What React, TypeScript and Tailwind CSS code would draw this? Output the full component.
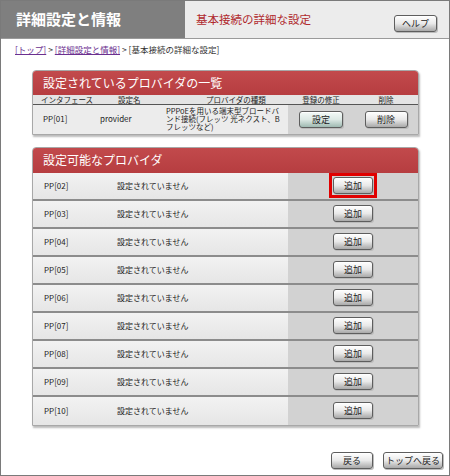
import React from 'react';

const jp = { fontFamily: '"Noto Sans CJK JP", "Liberation Sans", sans-serif' };

const Btn: React.FC<{ label: string; w?: string; teal?: boolean }> = ({ label, w = 'w-[42px]', teal }) => (
    <button
        className={`${w} h-[17px] rounded-[3px] border border-[#5e5e5e] text-[9px] leading-none text-[#222] shadow-[inset_0_1px_0_#fff,1px_1px_0_#bbb] ${
            teal
                ? 'bg-gradient-to-b from-[#f4faf8] via-[#dde9e5] to-[#9fbab2]'
                : 'bg-gradient-to-b from-[#ffffff] via-[#e9e9e9] to-[#a9a9a9]'
        }`}
    >
        {label}
    </button>
);

const slots = ['02', '03', '04', '05', '06', '07', '08', '09', '10'];

export default function App() {
    return (
        <div style={jp} className="w-[450px] h-[476px] border border-[#7a7a7a] bg-white flex flex-col">
            {/* ヘッダー */}
            <div className="flex h-[38px] border-b border-[#9a9a9a]">
                <div className="w-[184px] bg-[#7f7f7f] text-white font-bold text-[15px] flex items-center pl-[15px]">
                    詳細設定と情報
                </div>
                <div className="flex-1 bg-[#ececec] flex items-center pl-[11px] pr-[12px]">
                    <span className="text-[11.5px] text-[#b02a2e]">基本接続の詳細な設定</span>
                    <div className="ml-auto">
                        <Btn label="ヘルプ" w="w-[43px]" />
                    </div>
                </div>
            </div>

            {/* パンくず */}
            <div className="pl-[14px] pt-[4px] text-[8.5px] text-[#333]">
                <span className="text-[#6b2f8f] underline">[トップ]</span> &gt;{' '}
                <span className="text-[#6b2f8f] underline">[詳細設定と情報]</span> &gt; [基本接続の詳細な設定]
            </div>

            {/* 設定されているプロバイダ */}
            <div className="ml-[31px] mt-[14px] w-[387px] rounded-t-[4px] border border-[#a8a8a8] shadow-[1px_2px_2px_#bbb] overflow-hidden">
                <div className="h-[24px] bg-gradient-to-b from-[#c24a4c] to-[#b63d40] text-white text-[12px] flex items-center pl-[10px]">
                    設定されているプロバイダの一覧
                </div>
                <div className="grid grid-cols-[63px_65px_127px_66px_1fr] h-[10px] bg-[#e4e4e4] border-b border-[#555] text-[7.5px] leading-[9px] text-[#222] whitespace-nowrap overflow-hidden">
                    <div className="pl-[8px]">インタフェース</div>
                    <div className="pl-[22px]">設定名</div>
                    <div className="pl-[45px]">プロバイダの種類</div>
                    <div className="text-center">登録の修正</div>
                    <div className="text-center">削除</div>
                </div>
                <div className="grid grid-cols-[63px_65px_127px_66px_1fr] h-[29px] text-[8px] text-[#222]">
                    <div className="bg-[#ececec] pl-[10px] flex items-center">PP[01]</div>
                    <div className="bg-[#ececec] flex items-center pl-[4px]">provider</div>
                    <div className="bg-[#ececec] text-[7.5px] leading-[8px] pl-[5px] pr-[2px] pt-[2px]">
                        PPPoEを用いる端末型ブロードバンド接続(フレッツ 光ネクスト、Bフレッツなど)
                    </div>
                    <div className="bg-[#d3d3d3] flex items-center justify-center">
                        <Btn label="設定" w="w-[44px]" teal />
                    </div>
                    <div className="bg-[#d3d3d3] flex items-center justify-center">
                        <Btn label="削除" w="w-[43px]" />
                    </div>
                </div>
            </div>

            {/* 設定可能なプロバイダ */}
            <div className="ml-[31px] mt-[12px] w-[387px] rounded-t-[4px] border border-[#a8a8a8] shadow-[1px_2px_2px_#bbb] overflow-hidden">
                <div className="h-[25px] bg-gradient-to-b from-[#c24a4c] to-[#b63d40] text-white text-[12px] flex items-center pl-[10px]">
                    設定可能なプロバイダ
                </div>
                {slots.map((n, i) => (
                    <div
                        key={n}
                        className={`flex h-[28px] text-[8px] text-[#222] ${
                            i < slots.length - 1 ? 'border-b-2 border-[#8c8c8c]' : ''
                        }`}
                    >
                        <div className="w-[255px] bg-gradient-to-b from-[#f2f2f2] to-[#e6e6e6] flex items-center">
                            <span className="w-[84px] pl-[11px]">PP[{n}]</span>
                            <span>設定されていません</span>
                        </div>
                        <div className="flex-1 bg-[#d2d2d2] flex items-center justify-center">
                            {i === 0 ? (
                                <div className="border-[3px] border-[#e00000] p-[1px]">
                                    <Btn label="追加" w="w-[40px]" />
                                </div>
                            ) : (
                                <Btn label="追加" w="w-[40px]" />
                            )}
                        </div>
                    </div>
                ))}
            </div>

            {/* 下部ボタン */}
            <div className="flex justify-end gap-[10px] pr-[6px] mt-[26px]">
                <Btn label="戻る" w="w-[42px]" />
                <Btn label="トップへ戻る" w="w-[60px]" />
            </div>
        </div>
    );
}
